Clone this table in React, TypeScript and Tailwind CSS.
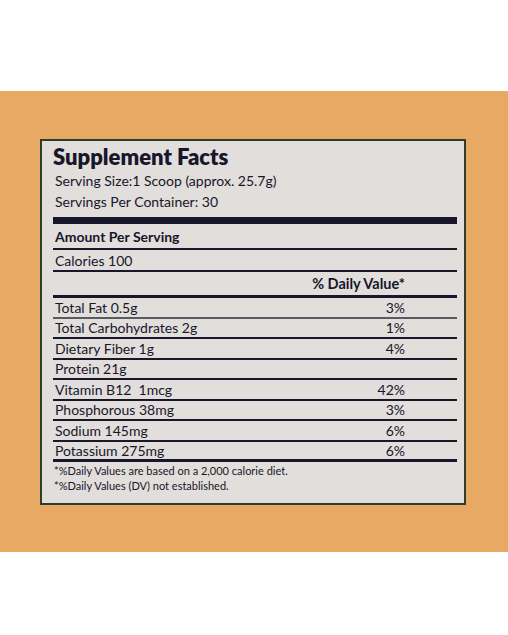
import React from 'react';

type Row = { label: string; dv: string };

const rows: Row[] = [
  { label: 'Total Fat 0.5g', dv: '3%' },
  { label: 'Total Carbohydrates 2g', dv: '1%' },
  { label: 'Dietary Fiber 1g', dv: '4%' },
  { label: 'Protein 21g', dv: '' },
  { label: 'Vitamin B12  1mcg', dv: '42%' },
  { label: 'Phosphorous 38mg', dv: '3%' },
  { label: 'Sodium 145mg', dv: '6%' },
  { label: 'Potassium 275mg', dv: '6%' },
];

const App: React.FC = () => {
  return (
    <div className="w-[508px] h-[635px] bg-white font-['Lato',sans-serif] text-[#17162a]">
      <div className="h-[91px]" />
      <div className="h-[461px] bg-[#e8a964] pt-[48px]">
        <div className="ml-[40px] w-[426px] h-[366px] border-2 border-[#2c3d2b] bg-[#e1dedb] pl-[11px] pr-[7px] pt-[3px]">
          <h1 className="text-[22px] font-extrabold leading-[26px]">Supplement Facts</h1>
          <p className="text-[14px] leading-[21px] pl-[2px]">Serving Size:1 Scoop (approx. 25.7g)</p>
          <p className="text-[14px] leading-[21px] pl-[2px]">Servings Per Container: 30</p>

          <div className="mt-[5px] h-[7px] bg-[#17162a]" />
          <div className="h-[26px] flex items-center pl-[2px] text-[14px] font-bold border-b-2 border-[#17162a]">
            Amount Per Serving
          </div>
          <div className="h-[22px] flex items-center pl-[2px] text-[14px] border-b-2 border-[#17162a]">
            Calories 100
          </div>
          <div className="h-[26px] flex items-center justify-end pr-[52px] text-[14.5px] font-bold border-b-[3px] border-[#17162a]">
            % Daily Value*
          </div>

          {rows.map((row, i) => (
            <div
              key={row.label}
              className={`h-[20.5px] flex items-center justify-between pl-[2px] pr-[52px] text-[14px] ${
                i === rows.length - 1 ? 'border-b-[3px] border-[#17162a]' : i === 0 ? 'border-b-2 border-[#5a5a62]' : 'border-b-2 border-[#17162a]'
              }`}
            >
              <span className="whitespace-pre">{row.label}</span>
              <span>{row.dv}</span>
            </div>
          ))}

          <div className="pt-[1px] pl-[1px] text-[11px] leading-[15px]">
            <p>*%Daily Values are based on a 2,000 calorie diet.</p>
            <p>*%Daily Values (DV) not established.</p>
          </div>
        </div>
      </div>
    </div>
  );
};

export default App;
